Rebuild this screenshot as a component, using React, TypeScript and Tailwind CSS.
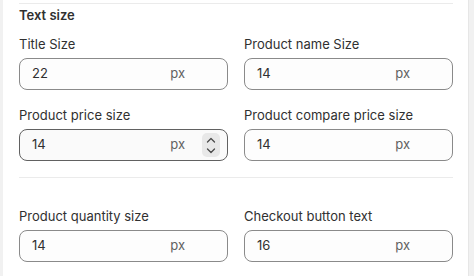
import React from "react";

function Stepper({ visible }: { visible: boolean }) {
  return (
    <div
      className={
        "ml-[17px] w-[18px] h-[24px] rounded-[5px] flex flex-col items-center justify-center gap-[5px] " +
        (visible ? "bg-[#e8e8e8]" : "bg-transparent")
      }
    >
      {visible && (
        <>
          <svg width="10" height="6" viewBox="0 0 10 6" fill="none">
            <path d="M1.5 5L5 1.5L8.5 5" stroke="#4a4a4a" strokeWidth="1.3" strokeLinecap="round" strokeLinejoin="round" />
          </svg>
          <svg width="10" height="6" viewBox="0 0 10 6" fill="none">
            <path d="M1.5 1L5 4.5L8.5 1" stroke="#4a4a4a" strokeWidth="1.3" strokeLinecap="round" strokeLinejoin="round" />
          </svg>
        </>
      )}
    </div>
  );
}

function Field({ label, value, hover = false }: { label: string; value: string; hover?: boolean }) {
  return (
    <div className="flex flex-col">
      <div className="text-[13px] leading-5 text-[#303030]">{label}</div>
      <div
        className={
          "mt-1 h-8 rounded-lg border flex items-center pl-3 pr-[7px] text-[13px] " +
          (hover ? "bg-[#fafafa] border-[#616161]" : "bg-[#fdfdfd] border-[#8a8a8a]")
        }
      >
        <span className="flex-1 text-[#303030]">{value}</span>
        <span className="text-[#616161]">px</span>
        <Stepper visible={hover} />
      </div>
    </div>
  );
}

export default function App() {
  return (
    <div className="w-[474px] h-[276px] bg-[#f1f1f1] flex overflow-hidden font-['Inter',sans-serif]">
      <div className="ml-[3px] w-[466px] h-full bg-white pl-4 pr-[15px] pt-[3px] border-r border-[#e6e6e6]">
        <div className="border-t border-[#ebebeb]" />
        <div className="mt-[1px] text-[13px] leading-5 font-semibold text-[#303030]">Text size</div>
        <div className="mt-[9px] grid grid-cols-2 gap-x-4 gap-y-[15px]">
          <Field label="Title Size" value="22" />
          <Field label="Product name Size" value="14" />
          <Field label="Product price size" value="14" hover />
          <Field label="Product compare price size" value="14" />
        </div>
        <div className="mt-4 border-t border-[#ebebeb]" />
        <div className="mt-[28px] grid grid-cols-2 gap-x-4">
          <Field label="Product quantity size" value="14" />
          <Field label="Checkout button text" value="16" />
        </div>
      </div>
    </div>
  );
}
